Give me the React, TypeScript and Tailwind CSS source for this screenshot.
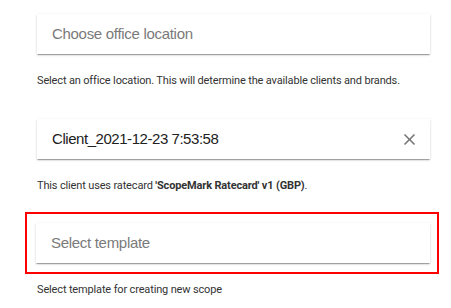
function CloseIcon() {
	return (
		<svg width="19" height="19" viewBox="0 0 24 24" fill="#757575">
			<path d="M19 6.41L17.59 5 12 10.59 6.41 5 5 6.41 10.59 12 5 17.59 6.41 19 12 13.41 17.59 19 19 17.59 13.41 12z" />
		</svg>
	);
}

function Field({
	value,
	placeholder,
	clearable,
}: {
	value?: string;
	placeholder: string;
	clearable?: boolean;
}) {
	return (
		<div className="flex h-10 items-center justify-between bg-white pl-[15px] pr-[11px] shadow-[0_2px_1px_-1px_rgba(0,0,0,0.2),0_1px_1px_0_rgba(0,0,0,0.14),0_1px_3px_0_rgba(0,0,0,0.12)]">
			<span
				className={`font-['Liberation_Sans',Arial,sans-serif] text-[15px] ${
					value ? "tracking-[-0.45px] text-[#212121]" : "tracking-[-0.3px] text-[#7a7a7a]"
				}`}
			>
				{value ?? placeholder}
			</span>
			{clearable && <CloseIcon />}
		</div>
	);
}

function Helper({ children }: { children: React.ReactNode }) {
	return (
		<p className="h-4 font-['Roboto',sans-serif] text-[11px] leading-4 tracking-[-0.15px] text-[#333]">
			{children}
		</p>
	);
}

export default function App() {
	return (
		<div className="min-h-[308px] w-[451px] bg-white pt-[14px] pl-[37px] pr-[21px]">
			<Field placeholder="Choose office location" />
			<div className="mt-[19px]">
				<Helper>
					Select an office location. This will determine the available clients and brands.
				</Helper>
			</div>

			<div className="mt-[30px]">
				<Field placeholder="" value="Client_2021-12-23 7:53:58" clearable />
			</div>
			<div className="mt-[19px]">
				<Helper>
					This client uses ratecard <b className="font-bold">'ScopeMark Ratecard' v1 (GBP)</b>.
				</Helper>
			</div>

			<div className="-ml-[12px] -mr-[9px] mt-[18px] border-2 border-[#ff0000] p-[9px] pr-[7px]">
				<Field placeholder="Select template" />
			</div>
			<div className="mt-[8px]">
				<Helper>Select template for creating new scope</Helper>
			</div>
		</div>
	);
}
